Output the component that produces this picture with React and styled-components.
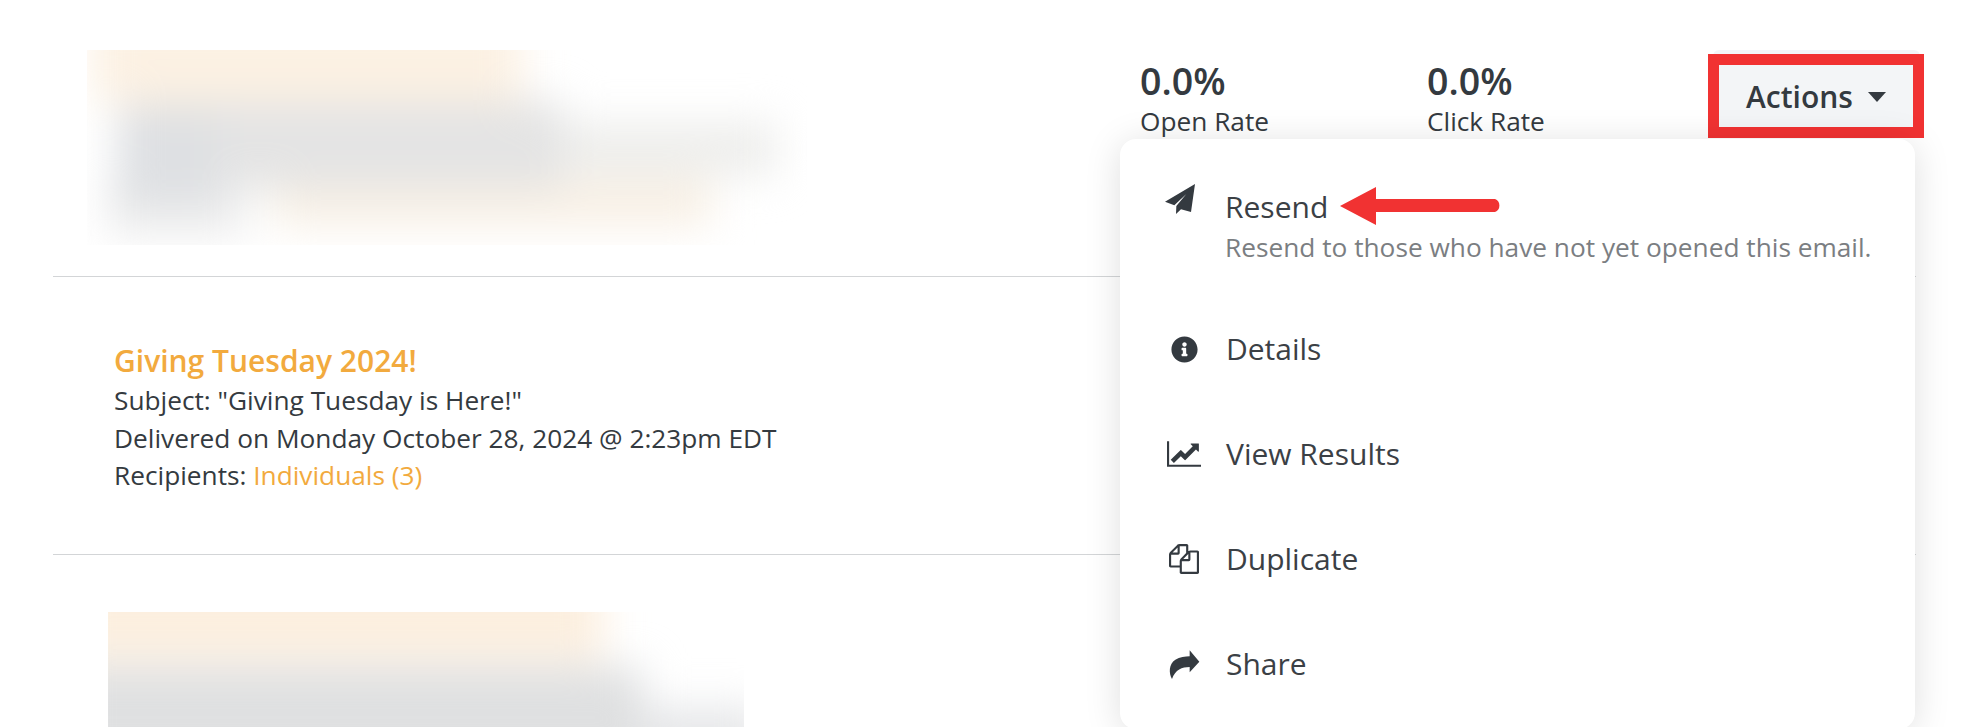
import React from 'react'
import styled, { createGlobalStyle } from 'styled-components'
import { FaInfoCircle } from 'react-icons/fa'

const GlobalStyle = createGlobalStyle`
  html, body {
    margin: 0;
    padding: 0;
    height: 727px;
    overflow: hidden;
    background: #fff;
    font-family: "Open Sans", "Liberation Sans", sans-serif;
    color: #343a40;
  }
`

const Page = styled.div`
  padding: 0 58px 0 53px;
`
const Row = styled.div`
  position: relative;
  display: flex;
  align-items: flex-start;
  height: ${p => p.$height}px;
  padding-top: ${p => p.$top}px;
  padding-left: ${p => p.$left}px;
  box-sizing: border-box;
  border-bottom: ${p => (p.$last ? 'none' : '1px solid #d3d5d7')};
`
const Blur = styled.div`
  position: relative;
  overflow: hidden;
  flex: none;
  width: ${p => p.$w}px;
  height: ${p => p.$h}px;
  &::before {
    content: '';
    position: absolute;
    inset: -40px;
    filter: blur(20px);
    background: ${p => p.$layers};
    background-repeat: no-repeat;
  }
`
const TextBlock = styled.div`
  font-size: 26.25px;
  line-height: 37.5px;
  color: #343a40;
`
const Title = styled.div`
  font-size: 30px;
  line-height: 42px;
  font-weight: 600;
  color: #f2aa3e;
`
const Link = styled.span`
  color: #f2aa3e;
`
const Right = styled.div`
  display: flex;
  align-items: flex-start;
  margin-left: auto;
  margin-right: -4px;
`
const Stat = styled.div`
  width: ${p => p.$w}px;
  padding-top: 7px;
`
const StatValue = styled.div`
  font-size: 37.5px;
  line-height: 48px;
  font-weight: 600;
  color: #343a40;
`
const StatLabel = styled.div`
  margin-top: -1px;
  font-size: 26.25px;
  line-height: 34px;
`
const ActionsWrap = styled.div`
  position: relative;
`
const ActionsButton = styled.div`
  display: flex;
  align-items: center;
  gap: 15px;
  width: 207px;
  height: 85px;
  padding: 7px 0 0 33px;
  box-sizing: border-box;
  background: #f3f5f7;
  border-radius: 6px 6px 0 0;
  font-size: 30px;
  font-weight: 600;
  color: #343a40;
`
const Caret = styled.span`
  width: 0;
  height: 0;
  margin-top: 2px;
  border-left: 9px solid transparent;
  border-right: 9px solid transparent;
  border-top: 10px solid #343a40;
`
const RedBox = styled.div`
  position: absolute;
  top: 4px;
  left: -5px;
  right: -4px;
  height: 84px;
  box-sizing: border-box;
  border: 11px solid #f13232;
`
const Menu = styled.div`
  position: absolute;
  z-index: 2;
  top: 139px;
  right: 1px;
  width: 795px;
  height: 590px;
  padding: 49px 0 0 45px;
  box-sizing: border-box;
  background: #fff;
  border-radius: 16px;
  box-shadow: 0 4px 36px rgba(0, 0, 0, 0.13);
`
const MenuItem = styled.div`
  display: flex;
  align-items: center;
  height: 105px;
`
const FirstItem = styled.div`
  display: flex;
  align-items: flex-start;
  height: 108.5px;
  position: relative;
`
const IconSlot = styled.div`
  display: flex;
  align-items: center;
  justify-content: center;
  flex: none;
  width: 38px;
  margin-right: 23px;
  color: #343a40;
  svg {
    display: block;
    fill: currentColor;
  }
`
const SendSlot = styled(IconSlot)`
  justify-content: flex-start;
  margin-top: -4px;
  margin-right: 22px;
`
const ItemLabel = styled.div`
  font-size: 30px;
  line-height: 38px;
  color: #3b4045;
`
const ItemHint = styled.div`
  margin-top: 4px;
  font-size: 26.25px;
  line-height: 34px;
  white-space: nowrap;
  color: #7b7e82;
`
const ArrowMark = styled.svg`
  position: absolute;
  left: 175px;
  top: -1px;
  fill: #f13232;
`

const SendIcon = () => (
  <svg width="30" height="30" viewBox="44 42 90 90">
    <path d="M134 42L44 95L72 106L108 72L78 108L77 132L92 118L122 126Z" />
  </svg>
)
const ChartIcon = () => (
  <svg width="34" height="30" viewBox="0 0 2048 1792">
    <path d="M2048 1536v128h-2048v-1536h128v1408h1920zm-128-1248v435q0 21-19.5 29.5t-35.5-7.5l-121-121-633 633q-10 10-23 10t-23-10l-233-233-416 416-192-192 585-585q10-10 23-10t23 10l233 233 464-464-121-121q-16-16-7.5-35.5t29.5-19.5h435q14 0 23 9t9 23z" />
  </svg>
)
const FilesIcon = () => (
  <svg width="30" height="30" viewBox="0 0 1792 1792">
    <path d="M1696 384q40 0 68 28t28 68v1216q0 40-28 68t-68 28h-960q-40 0-68-28t-28-68v-288h-544q-40 0-68-28t-28-68v-672q0-40 20-88t48-76l408-408q28-28 76-48t88-20h416q40 0 68 28t28 68v328q68-40 128-40h416zm-544 213l-299 299h299v-299zm-640-384l-299 299h299v-299zm196 647l316-316v-416h-384v416q0 40-28 68t-68 28h-416v640h512v-256q0-40 20-88t48-76zm956 804v-1152h-384v416q0 40-28 68t-68 28h-416v640h896z" />
  </svg>
)
const ShareIcon = () => (
  <svg width="35" height="30" viewBox="0 0 105 90">
    <path d="M68 4L97 38L68 70V54C45 54 25 62 15 90C5 72 5 45 25 32C38 24 55 22 68 22Z" />
  </svg>
)

// blurred-out email previews, layer offsets are relative to the -40px bleed
const topBlur = `
  linear-gradient(#fcf1e3, #fcf1e3) 45px 0 / 430px 92px,
  linear-gradient(#dee0e3, #dee0e3) 70px 105px / 100px 90px,
  linear-gradient(#e4e4e4, #e4e4e4) 75px 90px / 440px 88px,
  linear-gradient(#eeeeec, #eeeeec) 490px 112px / 240px 54px,
  linear-gradient(#f8f0e5, #f8f0e5) 225px 168px / 440px 48px,
  linear-gradient(#eeeeee, #eeeeee) 60px 170px / 140px 56px
`
const bottomBlur = `
  linear-gradient(#fcefdf, #fcefdf) 0 0 / 535px 88px,
  linear-gradient(#dfe0e1, #dfe0e1) 0 95px / 575px 120px,
  linear-gradient(#e6e7e9, #e6e7e9) 575px 135px / 120px 80px
`

const menuRows = [
  { label: 'Details', icon: <FaInfoCircle size={27} /> },
  { label: 'View Results', icon: <ChartIcon /> },
  { label: 'Duplicate', icon: <FilesIcon /> },
  { label: 'Share', icon: <ShareIcon /> },
]

const App = () => {
  return (
    <Page>
      <GlobalStyle />
      <Row $height={277} $top={50} $left={34}>
        <Blur $w={720} $h={195} $layers={topBlur} />
        <Right>
          <Stat $w={287}>
            <StatValue>0.0%</StatValue>
            <StatLabel>Open Rate</StatLabel>
          </Stat>
          <Stat $w={286}>
            <StatValue>0.0%</StatValue>
            <StatLabel>Click Rate</StatLabel>
          </Stat>
          <ActionsWrap>
            <ActionsButton>
              Actions
              <Caret />
            </ActionsButton>
            <RedBox />
          </ActionsWrap>
        </Right>
        <Menu>
          <FirstItem>
            <SendSlot>
              <SendIcon />
            </SendSlot>
            <div>
              <ItemLabel>Resend</ItemLabel>
              <ItemHint>Resend to those who have not yet opened this email.</ItemHint>
            </div>
            <ArrowMark width="162" height="38" viewBox="0 0 162 38">
              <path d="M0 19L36 0V12H155a7 7 0 0 1 0 13H36V38Z" />
            </ArrowMark>
          </FirstItem>
          {menuRows.map(row => (
            <MenuItem key={row.label}>
              <IconSlot>{row.icon}</IconSlot>
              <ItemLabel>{row.label}</ItemLabel>
            </MenuItem>
          ))}
        </Menu>
      </Row>
      <Row $height={278} $top={63} $left={61}>
        <TextBlock>
          <Title>Giving Tuesday 2024!</Title>
          <div>Subject: "Giving Tuesday is Here!"</div>
          <div>Delivered on Monday October 28, 2024 @ 2:23pm EDT</div>
          <div>
            Recipients: <Link>Individuals (3)</Link>
          </div>
        </TextBlock>
      </Row>
      <Row $height={173} $top={57} $left={55} $last>
        <Blur $w={636} $h={116} $layers={bottomBlur} />
      </Row>
    </Page>
  )
}

export default App
